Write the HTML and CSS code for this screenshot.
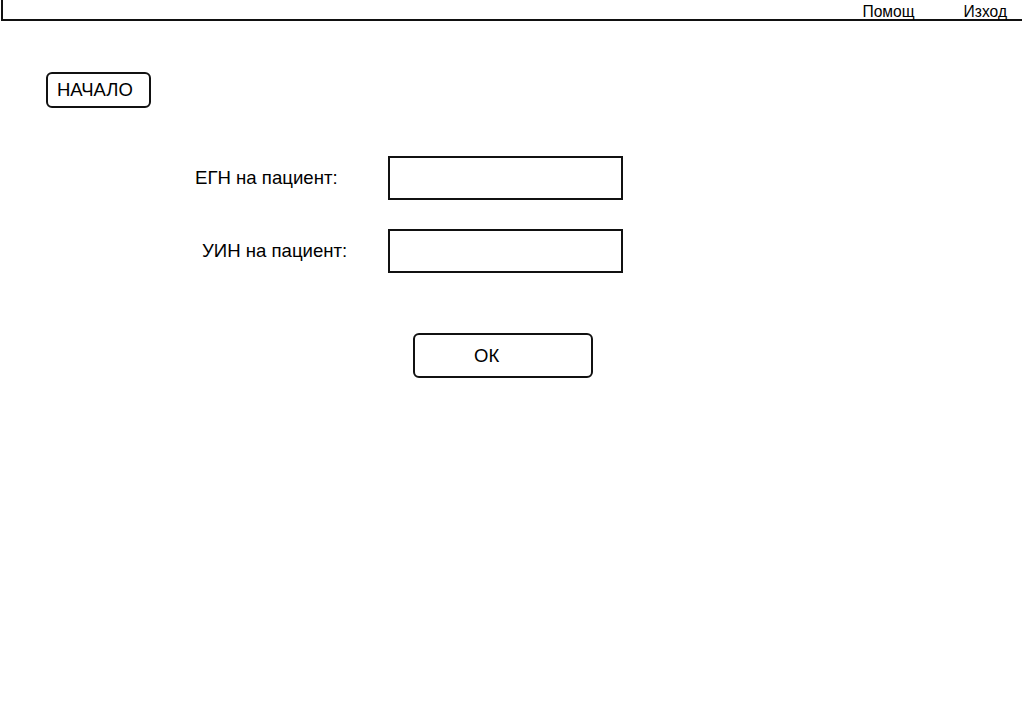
FILE: index.html
```html
<!DOCTYPE html>
<html lang="bg">
<head>
<meta charset="utf-8">
<title>Начало</title>
<link rel="stylesheet" href="styles.css">
</head>
<body>
<header class="topbar">
  <a class="toplink toplink-help" href="#">Помощ</a>
  <a class="toplink toplink-exit" href="#">Изход</a>
</header>
<main class="page">
  <button class="home-btn" type="button">НАЧАЛО</button>
  <form class="patient-form">
    <div class="row">
      <label class="label label-egn" for="egn">ЕГН на пациент:</label>
      <input class="field" id="egn" type="text">
    </div>
    <div class="row row-second">
      <label class="label label-uin" for="uin">УИН на пациент:</label>
      <input class="field" id="uin" type="text">
    </div>
    <div class="actions">
      <button class="ok-btn" type="button">ОК</button>
    </div>
  </form>
</main>
</body>
</html>
```

FILE: styles.css
```css
html, body {
  margin: 0;
  padding: 0;
  background: #fff;
  color: #000;
  font-family: "Liberation Sans", Arial, sans-serif;
}

.topbar {
  box-sizing: border-box;
  height: 21px;
  margin-left: 1px;
  border-left: 2px solid #111;
  border-bottom: 2px solid #111;
  display: flex;
  justify-content: flex-end;
  padding: 4px 15px 0 0;
  gap: 49px;
  font-size: 15.6px;
  line-height: 15px;
}

.toplink {
  color: #000;
  text-decoration: none;
}

.page {
  padding: 51px 0 0 46px;
}

.home-btn {
  box-sizing: border-box;
  display: block;
  width: 105px;
  height: 36px;
  padding: 0 0 0 9px;
  text-align: left;
  background: #fff;
  border: 2px solid #111;
  border-radius: 6px;
  font-family: "Liberation Sans", Arial, sans-serif;
  font-size: 18.5px;
  color: #000;
}

.patient-form {
  margin: 48px 0 0 149px;
}

.row {
  display: flex;
  align-items: center;
}

.row-second {
  margin-top: 29px;
}

.label {
  box-sizing: border-box;
  width: 193px;
  font-size: 18.6px;
}

.label-uin {
  padding-left: 7px;
}

.field {
  box-sizing: border-box;
  width: 235px;
  height: 44px;
  margin: 0;
  border: 2px solid #111;
  border-radius: 0;
  background: #fff;
  font-family: "Liberation Sans", Arial, sans-serif;
  font-size: 16px;
}

.actions {
  margin: 60px 0 0 218px;
}

.ok-btn {
  box-sizing: border-box;
  width: 180px;
  height: 45px;
  padding: 0 0 0 59px;
  text-align: left;
  background: #fff;
  border: 2px solid #111;
  border-radius: 6px;
  font-family: "Liberation Sans", Arial, sans-serif;
  font-size: 18.5px;
  color: #000;
}
```
